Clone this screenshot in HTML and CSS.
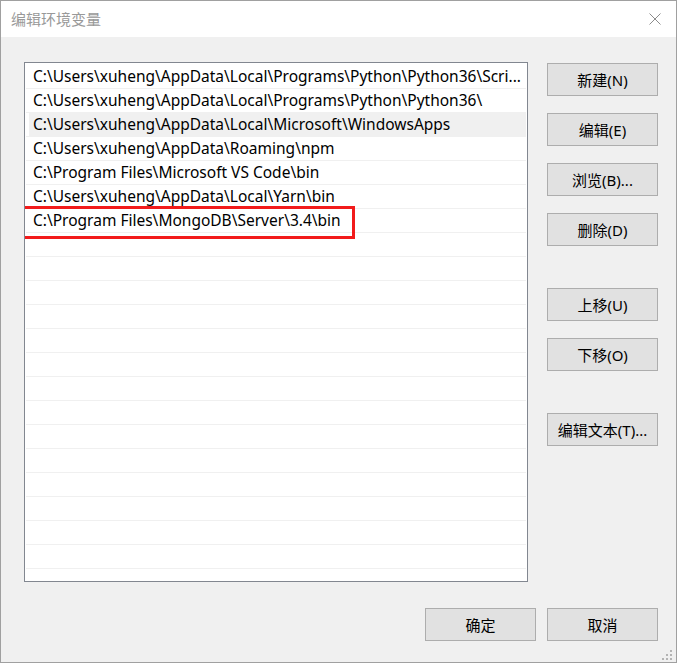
FILE: index.html
```html
<!DOCTYPE html>
<html lang="zh-CN">
<head>
<meta charset="utf-8">
<title>编辑环境变量</title>
<link rel="stylesheet" href="styles.css">
</head>
<body>
<div class="window">
  <div class="titlebar">
    <span class="title">编辑环境变量</span>
    <svg class="close" width="12" height="12" viewBox="0 0 12 12"><path d="M0.5 0.5 L11.5 11.5 M11.5 0.5 L0.5 11.5" stroke="#8c8c8c" stroke-width="1" fill="none"/></svg>
  </div>
  <div class="content">
    <div class="main">
      <div class="list">
        <div class="row">C:\Users\xuheng\AppData\Local\Programs\Python\Python36\Scri...</div>
        <div class="row">C:\Users\xuheng\AppData\Local\Programs\Python\Python36\</div>
        <div class="row selected">C:\Users\xuheng\AppData\Local\Microsoft\WindowsApps</div>
        <div class="row">C:\Users\xuheng\AppData\Roaming\npm</div>
        <div class="row">C:\Program Files\Microsoft VS Code\bin</div>
        <div class="row">C:\Users\xuheng\AppData\Local\Yarn\bin</div>
        <div class="row marked">C:\Program Files\MongoDB\Server\3.4\bin<span class="redbox"></span></div>
        <div class="row"></div>
        <div class="row"></div>
        <div class="row"></div>
        <div class="row"></div>
        <div class="row"></div>
        <div class="row"></div>
        <div class="row"></div>
        <div class="row"></div>
        <div class="row"></div>
        <div class="row"></div>
        <div class="row"></div>
        <div class="row"></div>
        <div class="row"></div>
        <div class="row"></div>
        <div class="row"></div>
      </div>
      <div class="side">
        <div class="group">
          <div class="btn">新建(N)</div>
          <div class="btn">编辑(E)</div>
          <div class="btn">浏览(B)...</div>
          <div class="btn">删除(D)</div>
        </div>
        <div class="group">
          <div class="btn">上移(U)</div>
          <div class="btn">下移(O)</div>
        </div>
        <div class="group">
          <div class="btn">编辑文本(T)...</div>
        </div>
      </div>
    </div>
    <div class="footer">
      <div class="btn">确定</div>
      <div class="btn">取消</div>
    </div>
  </div>
  <svg class="grip" width="10" height="10" viewBox="0 0 10 10">
    <rect x="8" y="0" width="2" height="2" fill="#b4b4b4"/>
    <rect x="4" y="4" width="2" height="2" fill="#b4b4b4"/>
    <rect x="8" y="4" width="2" height="2" fill="#b4b4b4"/>
    <rect x="0" y="8" width="2" height="2" fill="#b4b4b4"/>
    <rect x="4" y="8" width="2" height="2" fill="#b4b4b4"/>
    <rect x="8" y="8" width="2" height="2" fill="#b4b4b4"/>
  </svg>
</div>
</body>
</html>
```

FILE: styles.css
```css
html, body {
  margin: 0;
  padding: 0;
}
body {
  font-family: "Noto Sans", "Noto Sans CJK SC", sans-serif;
  font-size: 15px;
  color: #000;
  background: #f0f0f0;
}
.window {
  position: relative;
  width: 677px;
  height: 663px;
  box-sizing: border-box;
  border: 1px solid #a0a0a0;
  background: #f0f0f0;
  display: flex;
  flex-direction: column;
}
.titlebar {
  height: 36px;
  background: #fff;
  display: flex;
  align-items: center;
  justify-content: space-between;
  padding: 0 15px 0 10px;
  flex: none;
}
.title {
  color: #999;
  font-family: "Noto Sans CJK SC", sans-serif;
  font-size: 15px;
  margin-top: -1px;
}
.close {
  display: block;
  margin-top: -1px;
}
.content {
  flex: 1;
  display: flex;
  flex-direction: column;
  padding: 25px 18px 21px 23px;
}
.main {
  display: flex;
  gap: 19px;
}
.list {
  width: 504px;
  height: 520px;
  box-sizing: border-box;
  border: 1px solid #828790;
  background: #fff;
  padding: 1px 1px 0 1px;
  overflow: hidden;
}
.row {
  position: relative;
  height: 23px;
  border-bottom: 1px solid #f0f0f0;
  padding-left: 7px;
  line-height: 23px;
  font-size: 15.5px;
  white-space: nowrap;
}
.row:first-child {
  height: 24px;
  line-height: 24px;
}
.row.selected {
  background: linear-gradient(to right, transparent 3px, #f0f0f0 3px);
}
.redbox {
  position: absolute;
  left: -7px;
  top: -3px;
  width: 336px;
  height: 33px;
  box-sizing: border-box;
  border: 3px solid #f21b1b;
  pointer-events: none;
}
.side {
  display: flex;
  flex-direction: column;
  gap: 42px;
  margin-top: 1px;
}
.group {
  display: flex;
  flex-direction: column;
  gap: 17px;
}
.btn {
  width: 111px;
  height: 33px;
  box-sizing: border-box;
  border: 1px solid #adadad;
  background: #e1e1e1;
  display: flex;
  align-items: center;
  justify-content: center;
  font-size: 15px;
  color: #000;
  padding-bottom: 1px;
}
.footer {
  margin-top: 26px;
  display: flex;
  justify-content: flex-end;
  gap: 11px;
}
.grip {
  position: absolute;
  right: 4px;
  bottom: 2px;
}
```
